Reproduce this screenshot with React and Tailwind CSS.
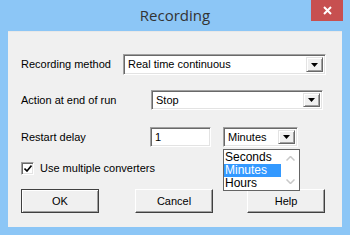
import React from "react";

const font = { fontFamily: '"Liberation Sans", Arial, sans-serif' };

function Arrow() {
  return (
    <svg width="7" height="4" viewBox="0 0 7 4" className="block">
      <path d="M0 0H7L3.5 4Z" fill="#000" />
    </svg>
  );
}

function DropBtn() {
  return (
    <div className="w-[17px] h-full bg-[#f0f0f0] flex items-center justify-center border border-t-[#e3e3e3] border-l-[#e3e3e3] border-b-[#696969] border-r-[#696969] shadow-[inset_1px_1px_0_#ffffff,inset_-1px_-1px_0_#a0a0a0]">
      <Arrow />
    </div>
  );
}

function Combo({ w, h, text, children }) {
  return (
    <div
      className={`relative flex items-stretch bg-white border border-t-[#a0a0a0] border-l-[#a0a0a0] border-b-white border-r-white shadow-[inset_1px_1px_0_#696969,inset_-1px_-1px_0_#e3e3e3] p-[2px] ${w} ${h}`}
    >
      <div className="flex-1 flex items-center pl-[2px] text-[11px] text-black leading-none">{text}</div>
      <DropBtn />
      {children}
    </div>
  );
}

function Btn({ label, isDefault }) {
  return (
    <div
      className={`w-[78px] h-[24px] flex items-center justify-center text-[11px] text-black bg-[#f0f0f0] ${
        isDefault
          ? "border border-[#404040] shadow-[inset_1px_1px_0_#ffffff,inset_-1px_-1px_0_#a0a0a0]"
          : "border border-t-white border-l-white border-b-[#404040] border-r-[#404040] shadow-[inset_-1px_-1px_0_#a0a0a0]"
      }`}
    >
      {label}
    </div>
  );
}

export default function App() {
  return (
    <div className="w-[350px] h-[235px] bg-[#8cc6f6] flex flex-col overflow-hidden" style={font}>
      <div className="h-[31px] grid grid-cols-[1fr_auto_1fr] items-start">
        <div />
        <div
          className="mt-[5px] text-[15px] text-[#333] leading-[20px]"
          style={{ fontFamily: '"Open Sans", "Noto Sans", sans-serif' }}
        >
          Recording
        </div>
        <div className="flex justify-end">
          <div className="mr-[7px] w-[32px] h-[21px] bg-[#c75050] flex items-center justify-center">
            <svg width="9" height="9" viewBox="0 0 9 9">
              <path d="M1 1L8 8M8 1L1 8" stroke="#fff" strokeWidth="2" />
            </svg>
          </div>
        </div>
      </div>
      <div className="mx-[8px] h-[196px] bg-[#f0f0f0] border-t border-[#e8e8e8] flex flex-col pl-[13px] text-[11px] leading-[13px] text-black">
        <div className="mt-[22px] flex items-center">
          <div className="w-[102px]">Recording method</div>
          <Combo w="w-[203px]" h="h-[21px]" text="Real time continuous" />
        </div>
        <div className="mt-[15px] flex items-center">
          <div className="w-[130px]">Action at end of run</div>
          <Combo w="w-[172px]" h="h-[20px]" text="Stop" />
        </div>
        <div className="mt-[17px] flex items-center">
          <div className="w-[129px]">Restart delay</div>
          <div className="w-[61px] h-[20px] bg-white border border-t-[#a0a0a0] border-l-[#a0a0a0] border-b-white border-r-white shadow-[inset_1px_1px_0_#696969,inset_-1px_-1px_0_#e3e3e3] flex items-center pl-[4px]">
            1
          </div>
          <div className="ml-[12px]">
            <Combo w="w-[75px]" h="h-[20px]" text="Minutes">
              <div className="absolute left-[-1px] top-[21px] w-[77px] h-[42px] bg-white border border-[#646464] flex z-10">
                <div className="w-[57px] flex flex-col text-[12px] leading-[13px]">
                  <div className="h-[13px] pl-[1px] mt-[1px] overflow-hidden">Seconds</div>
                  <div className="h-[13px] pl-[1px] bg-[#3399ff] text-white overflow-hidden">Minutes</div>
                  <div className="h-[13px] pl-[1px] overflow-hidden">Hours</div>
                </div>
                <div className="flex-1 flex flex-col items-center justify-between py-[6px]">
                  <svg width="9" height="5" viewBox="0 0 9 5">
                    <path d="M0.5 4.5L4.5 0.5L8.5 4.5" stroke="#c8c8c8" strokeWidth="1.5" fill="none" />
                  </svg>
                  <svg width="9" height="5" viewBox="0 0 9 5">
                    <path d="M0.5 0.5L4.5 4.5L8.5 0.5" stroke="#c8c8c8" strokeWidth="1.5" fill="none" />
                  </svg>
                </div>
              </div>
            </Combo>
          </div>
        </div>
        <div className="mt-[15px] flex items-center">
          <div className="w-[13px] h-[13px] bg-white border border-t-[#a0a0a0] border-l-[#a0a0a0] border-b-white border-r-white shadow-[inset_1px_1px_0_#696969,inset_-1px_-1px_0_#e3e3e3] flex items-center justify-center">
            <svg width="8" height="7" viewBox="0 0 8 7">
              <path d="M0.5 3.5L3 6L7.5 0.5" stroke="#000" strokeWidth="1.6" fill="none" />
            </svg>
          </div>
          <div className="ml-[6px]">Use multiple converters</div>
        </div>
        <div className="mt-[14px] flex">
          <Btn label="OK" isDefault />
          <div className="ml-[36px]">
            <Btn label="Cancel" />
          </div>
          <div className="ml-[34px]">
            <Btn label="Help" />
          </div>
        </div>
      </div>
    </div>
  );
}
